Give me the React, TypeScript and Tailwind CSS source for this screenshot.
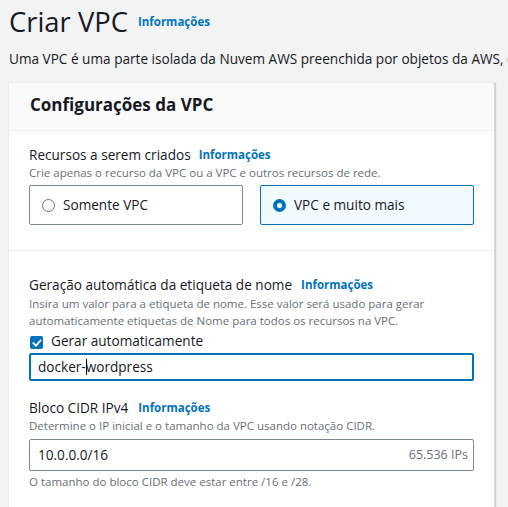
import React from "react";

function Info() {
  return <span className="text-[11.5px] font-bold text-[#0073bb] leading-[16px]">Informações</span>;
}

export default function App() {
  return (
    <div className="w-[508px] h-[507px] overflow-hidden bg-[#f2f3f3] font-['Open_Sans',sans-serif] text-[#16191f]">
      <div className="pl-[9px] pt-[4px] flex items-center gap-[10px] h-[40px]">
        <h1 className="text-[27.4px] leading-[36px] font-normal">Criar VPC</h1>
        <Info />
      </div>
      <p className="mt-[9px] pl-[9px] text-[13.6px] leading-[20px] whitespace-nowrap">
        Uma VPC é uma parte isolada da Nuvem AWS preenchida por objetos da AWS, como instâncias do Amazon EC2.
      </p>
      <div className="ml-[8px] mt-[13px] w-[487px] border border-[#eaeded] border-r-[#d5dbdb] bg-white shadow-[1px_1px_1px_0_rgba(0,28,36,0.15)]">
        <div className="h-[48px] bg-[#fafafa] border-b border-[#eaeded] pl-[21px] pt-[10px]">
          <h2 className="text-[17px] leading-[24px] font-bold">Configurações da VPC</h2>
        </div>
        <div className="px-[20px] pt-[14px] pb-[25px] border-b border-[#eaeded]">
          <div className="flex items-center gap-[8px] text-[13.6px] leading-[20px]">
            <span>Recursos a serem criados</span>
            <Info />
          </div>
          <p className="text-[11.5px] leading-[16px] text-[#687078]">
            Crie apenas o recurso da VPC ou a VPC e outros recursos de rede.
          </p>
          <div className="mt-[4px] grid grid-cols-2 gap-[17px]">
            <div className="h-[40px] border border-[#7d8998] rounded-[2px] flex items-center pl-[12px] gap-[8px] text-[13.6px]">
              <span className="w-[13px] h-[13px] rounded-full border-[1.5px] border-[#687078] bg-white" />
              <span>Somente VPC</span>
            </div>
            <div className="h-[40px] border border-[#0073bb] bg-[#f1faff] rounded-[2px] flex items-center pl-[12px] gap-[8px] text-[13.6px]">
              <span className="w-[13px] h-[13px] rounded-full border-[4px] border-[#0073bb] bg-white" />
              <span>VPC e muito mais</span>
            </div>
          </div>
        </div>
        <div className="px-[20px] pt-[24px] pb-[40px]">
          <div className="flex items-center gap-[9px] text-[13.6px] leading-[20px]">
            <span>Geração automática da etiqueta de nome</span>
            <Info />
          </div>
          <p className="text-[11.5px] leading-[17px] text-[#687078]">
            Insira um valor para a etiqueta de nome. Esse valor será usado para gerar automaticamente etiquetas de Nome para todos os recursos na VPC.
          </p>
          <div className="mt-[2px] flex items-center gap-[8px] h-[20px] pl-[1px]">
            <span className="mt-[3px] w-[13px] h-[13px] rounded-[2px] bg-[#0073bb] flex items-center justify-center">
              <svg width="10" height="10" viewBox="0 0 10 10">
                <path d="M1.5 5.2 L4 7.6 L8.6 2.4" fill="none" stroke="white" strokeWidth="1.8" strokeLinecap="square" />
              </svg>
            </span>
            <span className="text-[13.6px] leading-[20px]">Gerar automaticamente</span>
          </div>
          <div className="mt-[2px] h-[28px] border-2 border-[#0073bb] rounded-[2px] flex items-center pl-[7px] text-[13.6px]">
            <span>docker-</span>
            <span className="inline-block w-px h-[16px] bg-black -mr-px" />
            <span>wordpress</span>
          </div>
          <div className="mt-[17px] flex items-center gap-[10px] text-[13.6px] leading-[20px]">
            <span>Bloco CIDR IPv4</span>
            <Info />
          </div>
          <p className="text-[11.5px] leading-[16px] text-[#687078]">
            Determine o IP inicial e o tamanho da VPC usando notação CIDR.
          </p>
          <div className="mt-[5px] h-[32px] border border-[#7d8998] rounded-[2px] flex items-center justify-between pl-[8px] pr-[5px] text-[13.6px]">
            <span>10.0.0.0/16</span>
            <span className="text-[#687078] text-[12.5px]">65.536 IPs</span>
          </div>
          <p className="mt-[3px] text-[11.5px] leading-[16px] text-[#687078]">
            O tamanho do bloco CIDR deve estar entre /16 e /28.
          </p>
        </div>
      </div>
    </div>
  );
}
